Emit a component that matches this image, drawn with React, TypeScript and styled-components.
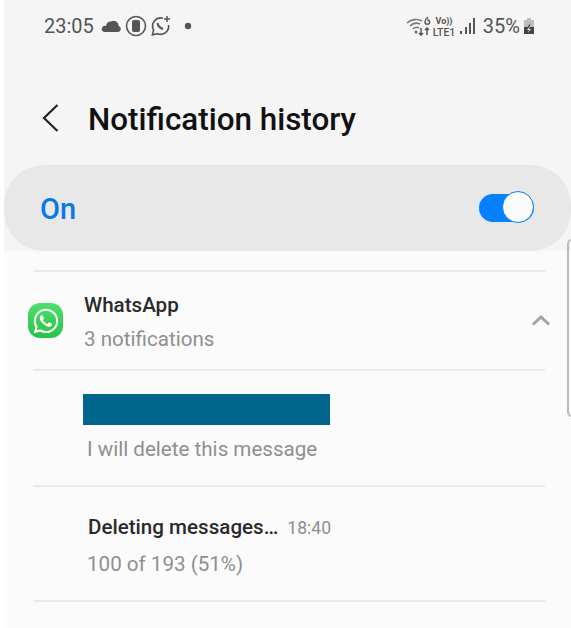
import styled, { createGlobalStyle } from 'styled-components';
import { FaWhatsapp } from 'react-icons/fa';

const GlobalStyle = createGlobalStyle`
html, body {
  margin: 0;
  padding: 0;
  background: #ffffff;
  font-family: Roboto, "Liberation Sans", sans-serif;
}
`;

const Page = styled.div`
position: relative;
width: 571px;
height: 628px;
padding-left: 4px;
box-sizing: border-box;
overflow: hidden;
background: #ffffff;
`;
const Screen = styled.div`
height: 100%;
display: flex;
flex-direction: column;
background: #fbfbfb;
`;
const Top = styled.div`
background: #f5f5f5;
`;
const StatusBar = styled.div`
height: 52px;
padding: 0 36px 0 40px;
display: flex;
align-items: center;
justify-content: space-between;
`;
const StatusGroup = styled.div`
display: flex;
align-items: center;
`;
const StatusText = styled.span<{ $left?: number }>`
margin-left: ${(p) => p.$left ?? 0}px;
font-size: 20px;
line-height: 24px;
color: #555555;
`;
const StatusIcon = styled.svg<{ $left: number }>`
margin-left: ${(p) => p.$left}px;
flex-shrink: 0;
`;
const Header = styled.div`
height: 113px;
padding: 0 0 23px 38px;
box-sizing: border-box;
display: flex;
align-items: flex-end;
`;
const BackIcon = styled.svg`
width: 18px;
height: 30px;
margin-bottom: 9px;
`;
const Title = styled.h1`
margin: 0 0 0 28px;
font-size: 31.4px;
line-height: 44px;
font-weight: 500;
color: #111111;
`;
const ToggleCard = styled.div`
height: 86px;
border-radius: 40px;
background: #e8e8e8;
padding: 2px 37px 0 36px;
box-sizing: border-box;
display: flex;
align-items: center;
justify-content: space-between;
`;
const OnLabel = styled.span`
font-size: 29px;
font-weight: 500;
color: #0a78e6;
`;
const Switch = styled.div`
position: relative;
width: 55px;
height: 28px;
margin-top: -2px;
border-radius: 14px;
background: #0381fe;
`;
const Knob = styled.div`
position: absolute;
top: -3px;
right: 0;
width: 30px;
height: 30px;
border-radius: 50%;
background: #fbfbfb;
border: 1.5px solid #0381fe;
`;
const List = styled.div`
padding: 19px 26px 0 29px;
`;
const Row = styled.div<{ $height: number }>`
height: ${(p) => p.$height}px;
border-top: 2px solid #e9e9e9;
box-sizing: border-box;
display: flex;
align-items: center;
`;
const AppIcon = styled.div`
width: 35px;
height: 35px;
margin-left: -5px;
border-radius: 12px;
background: linear-gradient(#4de06a, #27c24a);
color: #ffffff;
display: flex;
align-items: center;
justify-content: center;
font-size: 28px;
flex-shrink: 0;
`;
const AppText = styled.div`
margin-left: 21px;
flex: 1;
padding-top: 3px;
`;
const AppName = styled.div`
font-size: 20.6px;
line-height: 34px;
font-weight: 500;
color: #2a2a2a;
`;
const Sub = styled.div`
font-size: 20.6px;
line-height: 34px;
color: #8f8f8f;
`;
const Chevron = styled.svg`
width: 20px;
height: 12px;
flex-shrink: 0;
margin-right: -6px;
margin-bottom: 2px;
`;
const Message = styled.div`
padding: 3px 0 0 54px;
`;
const RedactedBar = styled.div`
width: 247px;
height: 31px;
margin: 1px 0 7px -4px;
background: #00668c;
`;
const MessageHead = styled.div`
display: flex;
align-items: baseline;
margin: 2px 0 3px 1px;
`;
const MessageTitle = styled.span`
font-size: 20.6px;
line-height: 33px;
font-weight: 500;
color: #2a2a2a;
`;
const Time = styled.span`
margin-left: 9px;
font-size: 17.6px;
color: #8f8f8f;
`;
const Handle = styled.div`
position: absolute;
top: 239px;
left: 567px;
width: 10px;
height: 178px;
border: 2px solid #bbbbbb;
border-radius: 6px;
box-sizing: border-box;
`;

const App = () => (
  <Page>
    <GlobalStyle />
    <Screen>
      <Top>
        <StatusBar>
          <StatusGroup>
            <StatusText>23:05</StatusText>
            <StatusIcon $left={7} width="20" height="12" viewBox="0 0 20 12">
              <path fill="#555" d="M3 12h14a3 3 0 0 0 .6-5.900A5 5 0 0 0 10 1.500 5 5 0 0 0 5 6 3 3 0 0 0 3 12z" />
            </StatusIcon>
            <StatusIcon $left={4} width="22" height="24" viewBox="0 0 22 24">
              <circle cx="11" cy="12" r="9.500" fill="none" stroke="#555" strokeWidth="1.600" />
              <rect x="7" y="6" width="8" height="12" rx="2" fill="#555" />
            </StatusIcon>
            <StatusIcon $left={3} width="22" height="24" viewBox="0 0 22 24">
              <path fill="none" stroke="#555" strokeWidth="1.600" d="M13 4.200A8.200 8.200 0 0 0 3.600 16L2.400 21l5-1.300A8.200 8.200 0 0 0 18.600 11" />
              <path fill="none" stroke="#555" strokeWidth="2" d="M7.500 9c.5 3 2.500 5 5.500 6" />
              <path stroke="#555" strokeWidth="1.500" d="M17 2v6M14 5h6" />
            </StatusIcon>
            <StatusIcon $left={12} width="8" height="8" viewBox="0 0 8 8">
              <circle cx="4" cy="4" r="3.200" fill="#555" />
            </StatusIcon>
          </StatusGroup>
          <StatusGroup>
            <StatusIcon $left={0} width="25" height="20" viewBox="0 0 25 20">
              <path fill="none" stroke="#777" strokeWidth="1.600" d="M1 7a13 13 0 0 1 15-2M4 10a9 9 0 0 1 10-2M7 13a5 5 0 0 1 6-1" />
              <circle cx="10" cy="16" r="1.500" fill="#666" />
              <path fill="none" stroke="#555" strokeWidth="1.500" d="M15 12v7M13 17l2 2 2-2M21 19v-7M19 14l2-2 2 2" />
              <path fill="none" stroke="#555" strokeWidth="1.500" d="M22 1c-2 1.500-3 3-3 5a2.300 2.300 0 1 0 2.300-2.300" />
            </StatusIcon>
            <StatusIcon $left={1} width="24" height="24" viewBox="0 0 24 24">
              <text x="12" y="10" textAnchor="middle" fontSize="9" fontWeight="700" fill="#555" fontFamily="Roboto">Vo))</text>
              <text x="12" y="22" textAnchor="middle" fontSize="10.500" fontWeight="500" fill="#555" fontFamily="Roboto">LTE1</text>
            </StatusIcon>
            <StatusIcon $left={3} width="17" height="18" viewBox="0 0 17 18">
              <path stroke="#555" strokeWidth="2" d="M2 14v3M7 10v7M11 6v11M15 1v16" />
            </StatusIcon>
            <StatusText $left={7}>35%</StatusText>
            <StatusIcon $left={3} width="12" height="16" viewBox="0 0 12 16">
              <path fill="#bdbdbd" d="M4 0h4v2h3v14H1V2h3z" />
              <path fill="#444" d="M1 9h3.500L7.500 5 6.500 9H11v7H1z" />
              <path fill="#e5e5e5" d="M7 8 4 12h2l-1 3 3-4H6z" />
            </StatusIcon>
          </StatusGroup>
        </StatusBar>
        <Header>
          <BackIcon viewBox="0 0 18 30">
            <path fill="none" stroke="#222" strokeWidth="2.200" d="M15.500 2 2 15l13.500 13" />
          </BackIcon>
          <Title>Notification history</Title>
        </Header>
        <ToggleCard>
          <OnLabel>On</OnLabel>
          <Switch>
            <Knob />
          </Switch>
        </ToggleCard>
      </Top>
      <List>
        <Row $height={99}>
          <AppIcon>
            <FaWhatsapp />
          </AppIcon>
          <AppText>
            <AppName>WhatsApp</AppName>
            <Sub>3 notifications</Sub>
          </AppText>
          <Chevron viewBox="0 0 20 12">
            <path fill="none" stroke="#a3a3a3" strokeWidth="3" d="M2 10.500 10 3l8 7.500" />
          </Chevron>
        </Row>
        <Row $height={116}>
          <Message>
            <RedactedBar />
            <Sub>I will delete this message</Sub>
          </Message>
        </Row>
        <Row $height={115}>
          <Message>
            <MessageHead>
              <MessageTitle>Deleting messages…</MessageTitle>
              <Time>18:40</Time>
            </MessageHead>
            <Sub>100 of 193 (51%)</Sub>
          </Message>
        </Row>
        <Row $height={2} />
      </List>
    </Screen>
    <Handle />
  </Page>
);

export default App;
